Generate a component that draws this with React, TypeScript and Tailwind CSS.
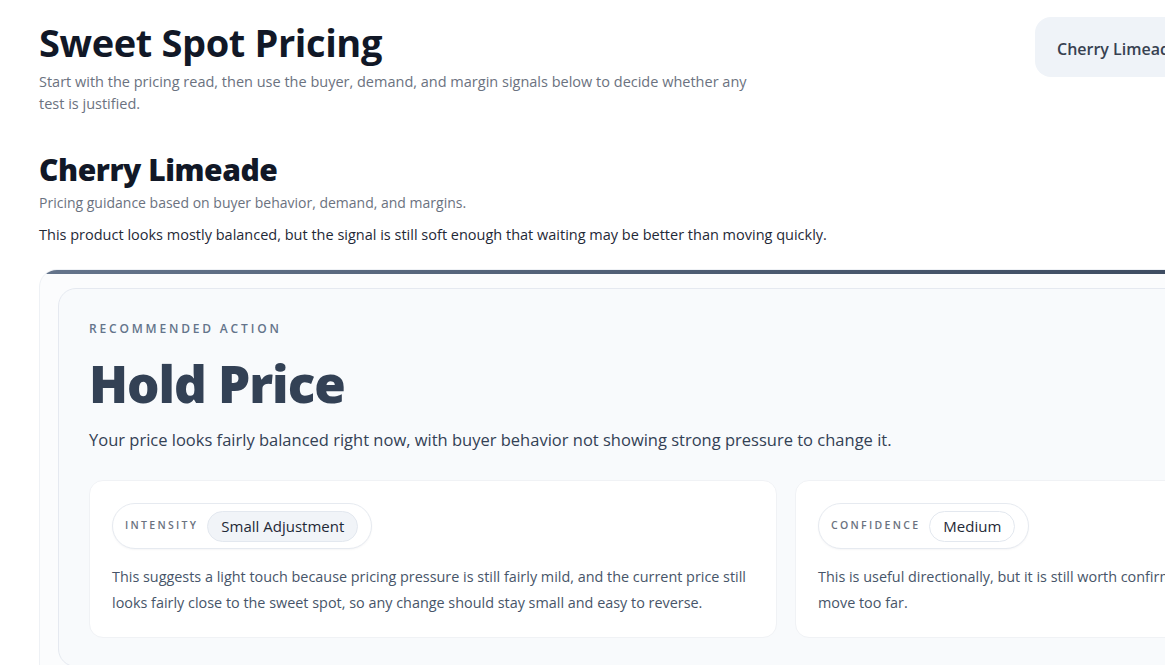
import React from "react";

const font = { fontFamily: '"Open Sans", "Noto Sans", sans-serif' };

function Pill({ label, value, tinted }: { label: string; value: string; tinted?: boolean }) {
  return (
    <div className="inline-flex items-center gap-[9px] h-[46px] rounded-full border border-[#e6eaf0] bg-white pl-[12px] pr-[13px] shadow-[0_1px_2px_rgba(15,23,42,0.04)]">
      <span className="text-[10.5px] font-semibold tracking-[0.22em] text-[#6b7280]">{label}</span>
      <span
        className={
          "inline-flex items-center h-[31px] rounded-full border px-[13px] text-[15px] font-medium text-[#1f2937] " +
          (tinted ? "bg-[#f1f4f8] border-[#e3e8ef]" : "bg-white border-[#e3e8ef]")
        }
      >
        {value}
      </span>
    </div>
  );
}

export default function App() {
  return (
    <div className="w-[1165px] h-[665px] overflow-hidden bg-white" style={font}>
      <div className="w-[1572px] px-[39px] pt-[17px]">
        <div className="flex justify-between items-start">
          <div className="pt-[2px]">
            <h1 className="text-[38px] leading-[46px] font-bold text-[#111827] tracking-[-0.01em]">Sweet Spot Pricing</h1>
            <p className="mt-[6px] w-[720px] text-[14.5px] leading-[22px] text-[#6b7280]">
              Start with the pricing read, then use the buyer, demand, and margin signals below to decide whether any test is justified.
            </p>
          </div>
          <div className="h-[60px] w-[498px] rounded-[16px] bg-[#eff3f8] px-[22px] pt-[3px] flex items-center text-[16px] font-semibold text-[#374151]">
            Cherry Limeade
          </div>
        </div>

        <div className="mt-[36px]">
          <h2 className="text-[30px] leading-[38px] font-extrabold text-[#111827] tracking-[-0.015em]">Cherry Limeade</h2>
          <p className="mt-[4px] text-[14px] leading-[20px] text-[#6b7280]">Pricing guidance based on buyer behavior, demand, and margins.</p>
          <p className="mt-[11px] text-[14.5px] leading-[22px] text-[#1f2937]">
            This product looks mostly balanced, but the signal is still soft enough that waiting may be better than moving quickly.
          </p>
        </div>

        <div className="mt-[23px] rounded-[18px] border border-[#eef1f5] bg-[#fbfcfd] overflow-hidden">
          <div className="h-[4px] bg-gradient-to-r from-[#64748b] to-[#334155]" />
          <div className="px-[18px] pt-[14px] pb-[18px]">
            <div className="rounded-[18px] border border-[#e5e9f0] bg-[#f8fafc] px-[30px] pt-[32px] pb-[28px]">
              <div className="text-[12px] leading-[16px] font-semibold tracking-[0.235em] text-[#64748b]">RECOMMENDED ACTION</div>
              <div className="mt-[15px] text-[51px] leading-[62px] font-extrabold text-[#334155] tracking-[-0.02em]">Hold Price</div>
              <p className="mt-[14px] text-[16.5px] leading-[24px] text-[#334155]">
                Your price looks fairly balanced right now, with buyer behavior not showing strong pressure to change it.
              </p>
              <div className="mt-[28px] grid grid-cols-2 gap-[18px]">
                <div className="rounded-[14px] bg-white border border-[#f0f2f5] px-[22px] pt-[22px] pb-[21px]">
                  <Pill label="INTENSITY" value="Small Adjustment" tinted />
                  <p className="mt-[15px] text-[14.4px] leading-[26px] text-[#475569]">
                    This suggests a light touch because pricing pressure is still fairly mild, and the current price still looks fairly close to the sweet spot, so any change should stay small and easy to reverse.
                  </p>
                </div>
                <div className="rounded-[14px] bg-white border border-[#f0f2f5] px-[22px] pt-[22px] pb-[21px]">
                  <Pill label="CONFIDENCE" value="Medium" />
                  <p className="mt-[15px] text-[14.4px] leading-[26px] text-[#475569]">
                    This is useful directionally, but it is still worth confirming with a small test first so you do not move too far.
                  </p>
                </div>
              </div>
            </div>
          </div>
        </div>
      </div>
    </div>
  );
}
